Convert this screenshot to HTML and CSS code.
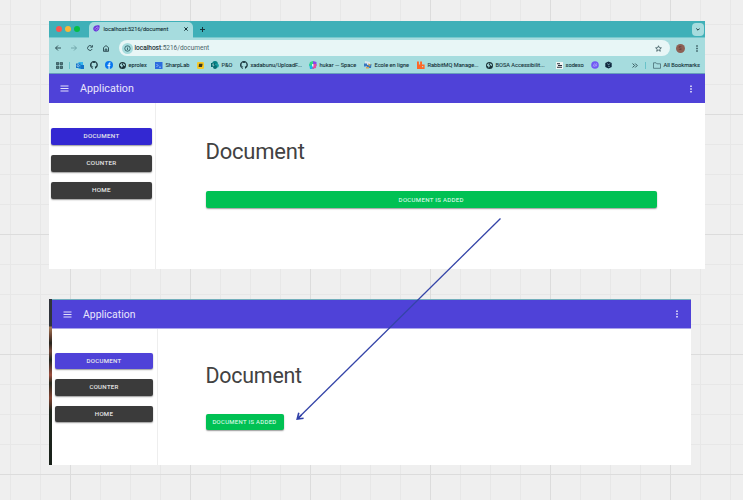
FILE: index.html
```html
<!DOCTYPE html>
<html lang="en">
<head>
<meta charset="utf-8">
<title>Document layout board</title>
<link rel="stylesheet" href="styles.css">
</head>
<body>
<svg class="defs" width="0" height="0" aria-hidden="true">
  <symbol id="github" viewBox="0 0 16 16"><path fill="#18343b" d="M8 0C3.6 0 0 3.6 0 8c0 3.5 2.3 6.5 5.5 7.6.4.1.5-.2.5-.4v-1.500c-2.200.5-2.700-1-2.700-1-.4-.9-.9-1.200-.9-1.200-.7-.5.1-.5.1-.5.8.1 1.200.8 1.200.8.7 1.300 1.900.9 2.300.7.1-.5.3-.9.5-1.100-1.800-.2-3.600-.9-3.600-4 0-.9.3-1.600.8-2.100-.1-.2-.4-1 .1-2.100 0 0 .7-.2 2.200.8a7.500 7.500 0 0 1 4 0c1.500-1 2.200-.8 2.200-.8.4 1.100.2 1.900.1 2.100.5.6.8 1.300.8 2.100 0 3.100-1.900 3.700-3.700 3.900.3.3.6.8.6 1.500v2.200c0 .2.1.5.6.4A8 8 0 0 0 8 0z"/></symbol>
  <symbol id="globe" viewBox="0 0 16 16"><circle cx="8" cy="8" r="8" fill="#1b3238"/><path fill="#a6dcde" d="M3 5l4-3 1 2-2 2 3 2-1 3-2 2-1-3-3-2zM10 3l3 2 1 3-2 1-2-2-1-1z"/></symbol>
  <symbol id="menu" viewBox="0 0 9 7"><path d="M.5 1h8M.5 3.500h8M.5 6h8" stroke="#e4e1fb" stroke-width="1"/></symbol>
  <symbol id="dots" viewBox="0 0 2 8"><path fill="currentColor" d="M.2 .4h1.600v1.600H.2zM.2 3.200h1.600v1.600H.2zM.2 6h1.600v1.600H.2z"/></symbol>
</svg>
<main class="board">
  <section class="window first">
    <div class="tabstrip">
      <div class="lights"><i class="red"></i><i class="yellow"></i><i class="green"></i></div>
      <div class="tab">
        <svg width="7" height="7" viewBox="0 0 14 14"><path fill="#6a35d9" d="M1 5C3 1 8 0 13 1c1 5-1 11-6 12C3 14-1 10 1 5z"/><path d="M4 9c0-3 3-5 6-5M6 10c3 0 4-3 5-5" stroke="#c9b6f5" stroke-width="1.300" fill="none"/></svg>
        <span class="tabname">localhost:5216/document</span>
        <svg class="close" width="4" height="4" viewBox="0 0 4 4"><path d="M.3.3l3.400 3.400M3.700.3L.3 3.700" stroke="#17353b"/></svg>
      </div>
      <svg class="plus" width="5" height="5" viewBox="0 0 5 5"><path d="M2.500 0v5M0 2.500h5" stroke="#17353b"/></svg>
      <div class="chevron"><svg width="4" height="3" viewBox="0 0 4 3"><path d="M.3.5L2 2.200 3.700.5" fill="none" stroke="#17353b"/></svg></div>
    </div>
    <div class="toolbar">
      <svg width="6" height="6" viewBox="0 0 6 6"><path d="M6 3H.7M3 .5L.5 3 3 5.500" fill="none" stroke="#18343b" stroke-width=".8"/></svg>
      <svg width="6" height="6" viewBox="0 0 6 6"><path d="M0 3h5.300M3 .5L5.500 3 3 5.500" fill="none" stroke="#5c9298" stroke-width=".7"/></svg>
      <svg width="6" height="6" viewBox="0 0 6 6"><path d="M5.200 4A2.400 2.400 0 1 1 4.800 1.400M5.400.2v2H3.400" fill="none" stroke="#18343b" stroke-width=".8"/></svg>
      <svg width="6" height="7" viewBox="0 0 6 7"><path d="M.5 2.600L3 .6l2.500 2v3.700h-5zM2.200 6.200V4h1.600v2.200" fill="none" stroke="#18343b" stroke-width=".8"/></svg>
      <div class="address">
        <span class="info"><svg width="7" height="7" viewBox="0 0 7 7"><circle cx="3.500" cy="3.500" r="2.700" fill="none" stroke="#24535a" stroke-width=".8"/><path d="M3.500 3v2M3.500 1.800v.7" stroke="#24535a" stroke-width=".8"/></svg></span>
        <span class="url"><b>localhost</b>:5216/document</span>
        <svg class="star" width="7" height="7" viewBox="0 0 14 14"><path d="M7 1.500l1.600 3.900 4.200.3-3.200 2.700 1 4.100L7 10.300l-3.600 2.200 1-4.100L1.200 5.700l4.200-.3z" fill="none" stroke="#24434a" stroke-width="1.400"/></svg>
      </div>
      <span class="avatar">S</span>
      <svg class="more" width="2" height="7" viewBox="0 0 2 8"><use href="#dots"/></svg>
    </div>
    <div class="bookmarks">
      <span><svg width="7" height="7" viewBox="0 0 7 7"><path d="M.4.4h2.300v2.300H.4zM4.200.4h2.300v2.300H4.200zM.4 4.200h2.300v2.300H.4zM4.200 4.200h2.300v2.300H4.200z" fill="#53787d" stroke="#18343b" stroke-width=".6"/></svg></span>
      <span class="sep"></span>
      <span><svg width="8" height="7" viewBox="0 0 8 7"><path fill="#35b5ee" d="M2.500 0H7v3L8 3.500V7H2.500z"/><path fill="#1473c8" d="M0 1.500h4.500V6H0zM5 3h3v4H4.500z"/><circle cx="2.200" cy="3.700" r="1.100" fill="none" stroke="#d4effb" stroke-width=".6"/></svg></span>
      <span><svg width="8" height="8"><use href="#github"/></svg></span>
      <span><svg width="8" height="8" viewBox="0 0 16 16"><circle cx="8" cy="8" r="8" fill="#0876ef"/><path d="M7 16v-6H5V7.500h2V6c0-2.300 1.200-3.300 4-3v2c-1.400-.1-1.700.3-1.700 1.300v1.200H11L10.600 10H9.300v6z" fill="#e5f8fb"/></svg></span>
      <span><svg width="7" height="7"><use href="#globe"/></svg><em class="w1">eprolex</em></span>
      <span><svg width="8" height="7" viewBox="0 0 8 7"><path d="M0 0h7.500v7H0z" fill="#2c6cdf"/><path d="M1.500 2l1.500 1.500L1.500 5M4 5.200h2" fill="none" stroke="#c2dcff" stroke-width=".7"/></svg><em class="w2">SharpLab</em></span>
      <span><svg width="7" height="7" viewBox="0 0 7 7"><rect width="7" height="7" rx="1.200" fill="#f5c928"/><path d="M2 1.800h3.600L5 5H1.600z" fill="#3b3a22"/></svg></span>
      <span><svg width="8" height="8" viewBox="0 0 8 8"><circle cx="4" cy="2.800" r="2.800" fill="#058083"/><circle cx="5.700" cy="4.600" r="2.200" fill="#159da0"/><circle cx="4" cy="6" r="2" fill="#076d72"/><path fill="#03696e" d="M0 2h4v4H0z"/><path d="M3 2.900H1.700v1h1.100v1H1.300" fill="none" stroke="#d8f2f2" stroke-width=".5"/></svg><em class="w3">P&amp;O</em></span>
      <span><svg width="8" height="8"><use href="#github"/></svg><em class="w4">xadabunu/UploadF...</em></span>
      <span><svg width="8" height="8" viewBox="0 0 8 8"><path fill="#13b8e8" d="M0 3l3-1 2 6H1z"/><path fill="#35d582" d="M1 1l3-1v4L0 5z"/><path fill="#8a45e8" d="M4 0l3.500 1v4L4 5z"/><path fill="#e84b9f" d="M5 3h2.500L7 7 3 8z"/><path fill="#d9fbf3" d="M3 3h1.500v2.500H3z"/></svg><em class="w5">hukar — Space</em></span>
      <span><svg width="8" height="8" viewBox="0 0 8 8"><path fill="#dce8f0" d="M1 0l5 1v5H1z"/><path fill="#3977bd" d="M0 2.500h3v3H0zM3 4l4.500-1L7 7H3z"/><path fill="#d8a44f" d="M4 2.500l3 1-2 2zM2 6h3v1.500H2z"/></svg><em class="w6">Ecole en ligne</em></span>
      <span><svg width="8" height="8" viewBox="0 0 8 8"><path fill="#ff6726" d="M0 .4h1.900v3h1.200v-3H5v3h2.600V8H0z"/><path fill="#a6dcde" d="M5 5h1.200v1.300H5z"/></svg><em class="w7">RabbitMQ Manage...</em></span>
      <span><svg width="7" height="7"><use href="#globe"/></svg><em class="w8">BOSA Accessibilit...</em></span>
      <span><svg width="7" height="7" viewBox="0 0 7 7"><path fill="#eef4f3" d="M0 0h7v7H0z"/><path d="M1 1.800h3M2 3.500h4M1 5.300h5" stroke="#262b36" stroke-width="1.100"/></svg><em class="w9">sodexo</em></span>
      <span><svg width="8" height="8" viewBox="0 0 8 8"><circle cx="4" cy="4" r="3.800" fill="#7058f4"/><path d="M2.200 5.500l1.300-3M3.500 5.800l2-3.600M5 5.500l.8-2" stroke="#c8c7fa" stroke-width=".6"/></svg></span>
      <span><svg width="7" height="8" viewBox="0 0 7 8"><path fill="#10283e" d="M3.500.5L6.700 2v4L3.500 7.500.3 6V2z"/><path d="M2 2.500l2 1.300 1-1.500M3 5.200l1.800.3" stroke="#81afba" stroke-width=".7" fill="none"/></svg></span>
      <span><svg width="6" height="5" viewBox="0 0 6 5"><path d="M.6.5l2 2-2 2M3.200.5l2 2-2 2" fill="none" stroke="#24454b" stroke-width=".9"/></svg></span>
      <span class="sep"></span>
      <span><svg width="8" height="7" viewBox="0 0 8 7"><path d="M.5 6.300V.8h2.600l.8 1h3.600v4.500z" fill="none" stroke="#496f76" stroke-width=".8"/></svg><em class="w10">All Bookmarks</em></span>
    </div>
    <header class="appbar"><svg width="9" height="7"><use href="#menu"/></svg><span>Application</span><svg class="more" width="2" height="8"><use href="#dots"/></svg></header>
    <div class="body">
      <nav class="side"><a class="btn hover">Document</a><a class="btn dark">Counter</a><a class="btn dark">Home</a></nav>
      <div class="content"><h1>Document</h1><a class="btn added">Document is added</a></div>
    </div>
  </section>
  <section class="window second">
    <div class="edge"></div>
    <div class="page">
      <header class="appbar"><svg width="9" height="7"><use href="#menu"/></svg><span>Application</span><svg class="more" width="2" height="8"><use href="#dots"/></svg></header>
      <div class="body">
        <nav class="side"><a class="btn primary">Document</a><a class="btn dark">Counter</a><a class="btn dark">Home</a></nav>
        <div class="content"><h1>Document</h1><a class="btn added">Document is added</a></div>
      </div>
    </div>
  </section>
  <svg class="arrow" width="743" height="500" viewBox="0 0 743 500"><path d="M500.500 218.500L298.500 417.800" stroke="#3444a8" stroke-width="1.300"/><path d="M298.800 412.800l-1.600 6.200 6.400-.8M297.500 418.800l4-3.800" fill="none" stroke="#3040a8" stroke-width="1.600"/></svg>
</main>
</body>
</html>
```
FILE: styles.css
```css
* { box-sizing: border-box; }
body { margin: 0; font-family: Roboto, sans-serif; }
.defs { position: absolute; }
svg { display: block; flex: none; }
.board {
  position: relative;
  width: 743px;
  height: 500px;
  overflow: hidden;
  padding: 21px 0 0 49px;
  background-color: #efefef;
  background-image:
    linear-gradient(90deg, #dcdcdc 1px, transparent 1px),
    linear-gradient(#dcdcdc 1px, transparent 1px),
    linear-gradient(90deg, #e7e7e7 1px, transparent 1px),
    linear-gradient(#e7e7e7 1px, transparent 1px);
  background-size: 120px 120px, 120px 120px, 30px 30px, 30px 30px;
  background-position: 70px 0, 0 114px, 10px 0, 0 24px;
}
.window { background: #fff; }
.first { width: 656px; height: 248px; display: flex; flex-direction: column; }

.tabstrip { height: 17px; background: #3fb0b8; display: flex; align-items: center; flex: none; padding-right: 1px; border-bottom: 1px solid #76c8cd; }
.lights { display: flex; gap: 3px; padding-left: 7px; width: 40px; }
.lights i { width: 6px; height: 6px; border-radius: 50%; }
.red { background: #fb5450; }
.yellow { background: #f7b737; }
.green { background: #07bd46; }
.tab { width: 104px; height: 16px; margin-top: 1px; border-radius: 5px 5px 0 0; background: #a6dcde; display: flex; align-items: center; padding: 0 5px 2px 4px; }
.tabname { margin-left: 3.500px; font-size: 5.650px; color: #17353b; -webkit-text-stroke: .1px #17353b; white-space: nowrap; }
.close { margin-left: auto; }
.plus { margin-left: 7px; }
.chevron { margin-left: auto; width: 12px; height: 13px; border-radius: 4px; background: #a6dcde; display: grid; place-items: center; }

.toolbar { height: 20px; background: #a6dcde; flex: none; display: flex; align-items: center; gap: 10px; padding: 0 7px 0 6px; }
.toolbar .address { width: 551px; height: 15.500px; margin-left: -.5px; border-radius: 8px; background: #e8f6f6; display: flex; align-items: center; padding: 0 8px 0 3px; }
.info { width: 11px; height: 11px; border-radius: 50%; background: #a6dcde; display: grid; place-items: center; }
.url { margin-left: 2px; font-size: 6.500px; color: #496469; white-space: nowrap; }
.url b { font-weight: 400; color: #14292e; -webkit-text-stroke: .12px #14292e; }
.star { margin-left: auto; }
.avatar { width: 9px; height: 9px; margin-left: -4px; border-radius: 50%; background: #8d6055; color: #5e332c; font-size: 5px; line-height: 9px; text-align: center; flex: none; }
.toolbar .more { color: #18343b; margin-left: auto; }

.bookmarks {
  height: 16px;
  flex: none;
  background: #a6dcde;
  border-bottom: 1px solid #679fbb;
  display: grid;
  grid-template-columns: 13px 7px 14px 15px 14px 36px 42px 14px 29px 69px 55px 53px 69px 70px 35px 14px 27px 13px 8px 1fr;
  padding: 0 0 1px 7px;
  align-items: center;
}
.bookmarks span { display: flex; align-items: center; gap: 2.500px; }
.bookmarks em { font: 400 5.650px/8px Roboto, sans-serif; -webkit-text-stroke: .1px #17353b; color: #17353b; white-space: nowrap; }
.bookmarks .sep { width: 1px; height: 7px; background: #69c3ca; }

.appbar { height: 29px; flex: none; background: #4f42d8; color: #e9e7fc; display: flex; align-items: center; padding: 0 13.500px 0 10.500px; font-size: 10.700px; letter-spacing: .02px; }
.appbar span { margin-left: 11.500px; }
.appbar .more { margin-left: auto; }
.body { display: flex; flex: 1; }
.side { width: 107px; border-right: 1px solid #eee; padding: 25px 3px 0 2px; display: flex; flex-direction: column; gap: 10px; }
.btn { height: 17px; border-radius: 2px; color: #ececec; font-size: 6.200px; line-height: 17px; font-weight: 400; -webkit-text-stroke: .1px currentColor; letter-spacing: .34px; text-transform: uppercase; text-align: center; white-space: nowrap; box-shadow: 0 1px 1.500px rgba(0, 0, 0, .4); }
.hover { background: #3328d2; }
.primary { background: #4f42d8; }
.dark { background: #3b3b3b; }
.added { background: #00c153; color: #d5f8e2; font-size: 6px; }
.content { flex: 1; padding: 35px 48px 0 49.500px; display: flex; flex-direction: column; }
h1 { margin: 0 0 25px; height: 28px; line-height: 28px; font-size: 22px; font-weight: 400; letter-spacing: -.22px; color: #424242; }

.second { width: 642px; height: 166px; margin-top: 30px; display: flex; }
.edge { width: 3px; background: linear-gradient(#30343b 0 27px, #a87c58 28px, #674332 37px, #25251f 44px, #76483a 52px, #222820 61px, #9b4d3d 76px, #282b20 84px, #844331 99px, #20271e 112px, #182019); }
.page { flex: 1; display: flex; flex-direction: column; }
.second .appbar { height: 30px; border-top: 1.500px solid #72aebc; border-bottom: 1px solid #aaa3eb; padding: 0 13px 0 10.500px; font-size: 10.400px; }
.second .side { width: 106px; padding: 24px 4px 0 3px; gap: 10px; border-right: 1px solid #eee; }
.second .btn { height: 16.300px; line-height: 16.300px; font-size: 6px; }
.second .content { align-items: flex-start; padding: 33px 0 0 47.500px; }
.second h1 { font-size: 21.400px; margin-bottom: 24px; }
.second .added { width: 78px; font-size: 5.900px; }
.arrow { position: absolute; left: 0; top: 0; }
```
